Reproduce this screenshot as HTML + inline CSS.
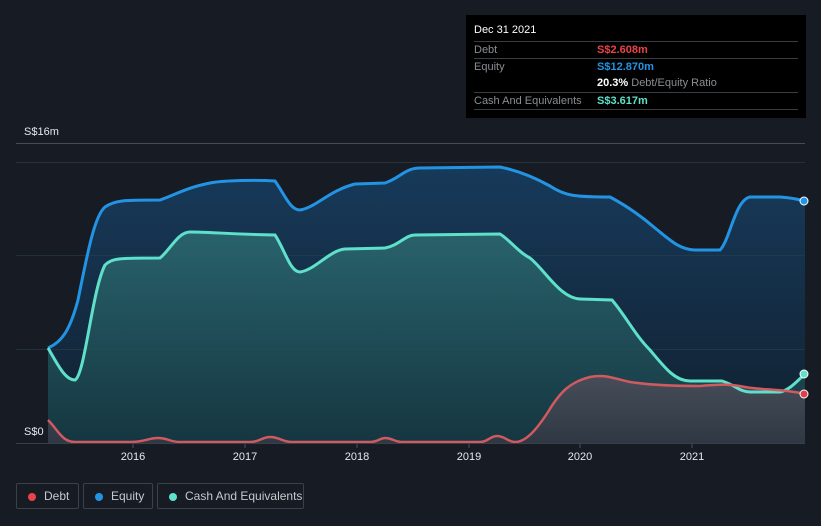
<!DOCTYPE html>
<html><head><meta charset="utf-8"><style>
body{margin:0;width:821px;height:526px;background:#161b24;font-family:"Liberation Sans",sans-serif;overflow:hidden;position:relative}
.tt{position:absolute;left:466px;top:15px;width:340px;height:103px;background:#000}
.tt .h{position:absolute;left:8px;top:9px;color:#fff;font-size:11px}
.row{position:absolute;left:8px;width:324px;border-top:1px solid #3a3d42;font-size:11px;height:16px;line-height:17px}
.row .l{position:absolute;left:0;color:#8a8d92}
.row .v{position:absolute;left:123px;font-weight:bold}
.leg{position:absolute;top:483px;height:26px;border:1px solid #3b414b;border-radius:2px;color:#c6c9ce;font-size:12px;line-height:26px;box-sizing:border-box}
.leg i{position:absolute;left:11px;top:9px;width:8px;height:8px;border-radius:50%}
.leg span{position:absolute;left:27px;top:-1px}
</style></head><body>
<svg width="821" height="526" style="position:absolute;left:0;top:0">
<defs>
<linearGradient id="ge" x1="0" y1="0" x2="0" y2="1"><stop offset="0" stop-color="#173a5a"/><stop offset="1" stop-color="#11202f"/></linearGradient>
<linearGradient id="gc" x1="0" y1="0" x2="0" y2="1"><stop offset="0" stop-color="#2c6a70"/><stop offset="1" stop-color="#163a44"/></linearGradient>
<linearGradient id="gd" x1="0" y1="0" x2="0" y2="1"><stop offset="0" stop-color="#4e4f5a"/><stop offset="1" stop-color="#333844"/></linearGradient>
</defs>
<line x1="16" y1="143.5" x2="805" y2="143.5" stroke="#464b54"/>
<line x1="16" y1="162.5" x2="805" y2="162.5" stroke="#2a303a"/>
<path d="M48,348 C62,342 70,330 78,300 C88,250 95,215 105,207 C115,200 125,200 160,200 C175,195 185,188 210,183 C225,180 260,180 275,181 C285,195 290,210 300,210 C315,208 330,190 355,184 L385,183 C400,178 405,168 420,168 L500,167 C515,170 530,175 550,186 C565,196 575,197 610,197 C625,205 640,215 655,228 C670,240 680,250 695,250 L720,250 C730,240 735,200 750,197 L780,197 C795,198 800,200 805,201 L805,443 L48,443Z" fill="url(#ge)"/>
<line x1="16" y1="255.5" x2="805" y2="255.5" stroke="#2c4050" stroke-opacity=".6"/>
<line x1="16" y1="349.5" x2="805" y2="349.5" stroke="#2c4050" stroke-opacity=".6"/>
<path d="M48,348 C58,365 65,380 75,380 C85,375 92,290 105,265 C112,258 120,258 160,258 C170,250 178,232 190,232 C210,232 225,234 275,235 C285,250 290,272 300,272 C315,270 330,250 345,249 L385,248 C400,245 405,235 415,235 L500,234 C510,240 518,252 530,258 C545,270 560,298 580,299 L612,300 C625,315 635,335 650,350 C665,368 675,381 690,381 L722,381 C735,385 740,392 750,392 L780,392 C790,390 798,380 805,374 L805,443 L48,443Z" fill="url(#gc)" fill-opacity=".85"/>
<path d="M48,420 C58,430 62,442 75,442 L130,442 C145,442 148,438 158,438 C168,438 170,442 180,442 L250,442 C260,442 262,437 270,437 C280,437 282,442 292,442 L370,442 C378,442 380,438 385,438 C392,438 395,442 402,442 L480,442 C488,442 490,436 497,436 C505,436 508,442 515,442 C525,442 535,432 548,412 C560,392 570,382 590,377 C605,374 612,378 630,382 C650,385 670,386 700,386 C715,385 725,383 745,387 C760,390 785,389 805,394 L805,443 L48,443Z" fill="url(#gd)" fill-opacity=".85"/>
<path d="M48,348 C62,342 70,330 78,300 C88,250 95,215 105,207 C115,200 125,200 160,200 C175,195 185,188 210,183 C225,180 260,180 275,181 C285,195 290,210 300,210 C315,208 330,190 355,184 L385,183 C400,178 405,168 420,168 L500,167 C515,170 530,175 550,186 C565,196 575,197 610,197 C625,205 640,215 655,228 C670,240 680,250 695,250 L720,250 C730,240 735,200 750,197 L780,197 C795,198 800,200 805,201" fill="none" stroke="#2394e3" stroke-width="3"/>
<path d="M48,348 C58,365 65,380 75,380 C85,375 92,290 105,265 C112,258 120,258 160,258 C170,250 178,232 190,232 C210,232 225,234 275,235 C285,250 290,272 300,272 C315,270 330,250 345,249 L385,248 C400,245 405,235 415,235 L500,234 C510,240 518,252 530,258 C545,270 560,298 580,299 L612,300 C625,315 635,335 650,350 C665,368 675,381 690,381 L722,381 C735,385 740,392 750,392 L780,392 C790,390 798,380 805,374" fill="none" stroke="#5ee0cb" stroke-width="3"/>
<path d="M48,420 C58,430 62,442 75,442 L130,442 C145,442 148,438 158,438 C168,438 170,442 180,442 L250,442 C260,442 262,437 270,437 C280,437 282,442 292,442 L370,442 C378,442 380,438 385,438 C392,438 395,442 402,442 L480,442 C488,442 490,436 497,436 C505,436 508,442 515,442 C525,442 535,432 548,412 C560,392 570,382 590,377 C605,374 612,378 630,382 C650,385 670,386 700,386 C715,385 725,383 745,387 C760,390 785,389 805,394" fill="none" stroke="#d05a60" stroke-width="2.5"/>
<line x1="16" y1="443.5" x2="805" y2="443.5" stroke="#3a404a"/>
<g stroke="#4a505a"><line x1="133" y1="444" x2="133" y2="448"/><line x1="245" y1="444" x2="245" y2="448"/><line x1="357" y1="444" x2="357" y2="448"/><line x1="469" y1="444" x2="469" y2="448"/><line x1="580" y1="444" x2="580" y2="448"/><line x1="692" y1="444" x2="692" y2="448"/></g>
<circle cx="804" cy="201" r="4" fill="#2394e3" stroke="#fff" stroke-width="1"/>
<circle cx="804" cy="374" r="4" fill="#5ee0cb" stroke="#fff" stroke-width="1"/>
<circle cx="804" cy="394" r="4" fill="#e0404a" stroke="#fff" stroke-width="1"/>
<g fill="#e6e8eb" font-family="Liberation Sans" font-size="11">
<text x="24" y="135">S$16m</text><text x="24" y="435">S$0</text>
<g text-anchor="middle"><text x="133" y="460">2016</text><text x="245" y="460">2017</text><text x="357" y="460">2018</text><text x="469" y="460">2019</text><text x="580" y="460">2020</text><text x="692" y="460">2021</text></g>
</g>
</svg>
<div class="tt">
<div class="h">Dec 31 2021</div>
<div class="row" style="top:26px"><span class="l">Debt</span><span class="v" style="color:#e8434a">S$2.608m</span></div>
<div class="row" style="top:43px"><span class="l">Equity</span><span class="v" style="color:#2394e3">S$12.870m</span></div>
<div class="row" style="top:60px;border-top:none"><span class="v" style="color:#fff">20.3% <span style="color:#8a8d92;font-weight:normal">Debt/Equity Ratio</span></span></div>
<div class="row" style="top:77px;border-bottom:1px solid #3a3d42"><span class="l">Cash And Equivalents</span><span class="v" style="color:#5ee0cb">S$3.617m</span></div>
</div>
<div class="leg" style="left:16px;width:63px"><i style="background:#e8434a"></i><span>Debt</span></div>
<div class="leg" style="left:83px;width:70px"><i style="background:#2394e3"></i><span>Equity</span></div>
<div class="leg" style="left:157px;width:147px"><i style="background:#5ee0cb"></i><span>Cash And Equivalents</span></div>
</body></html>
